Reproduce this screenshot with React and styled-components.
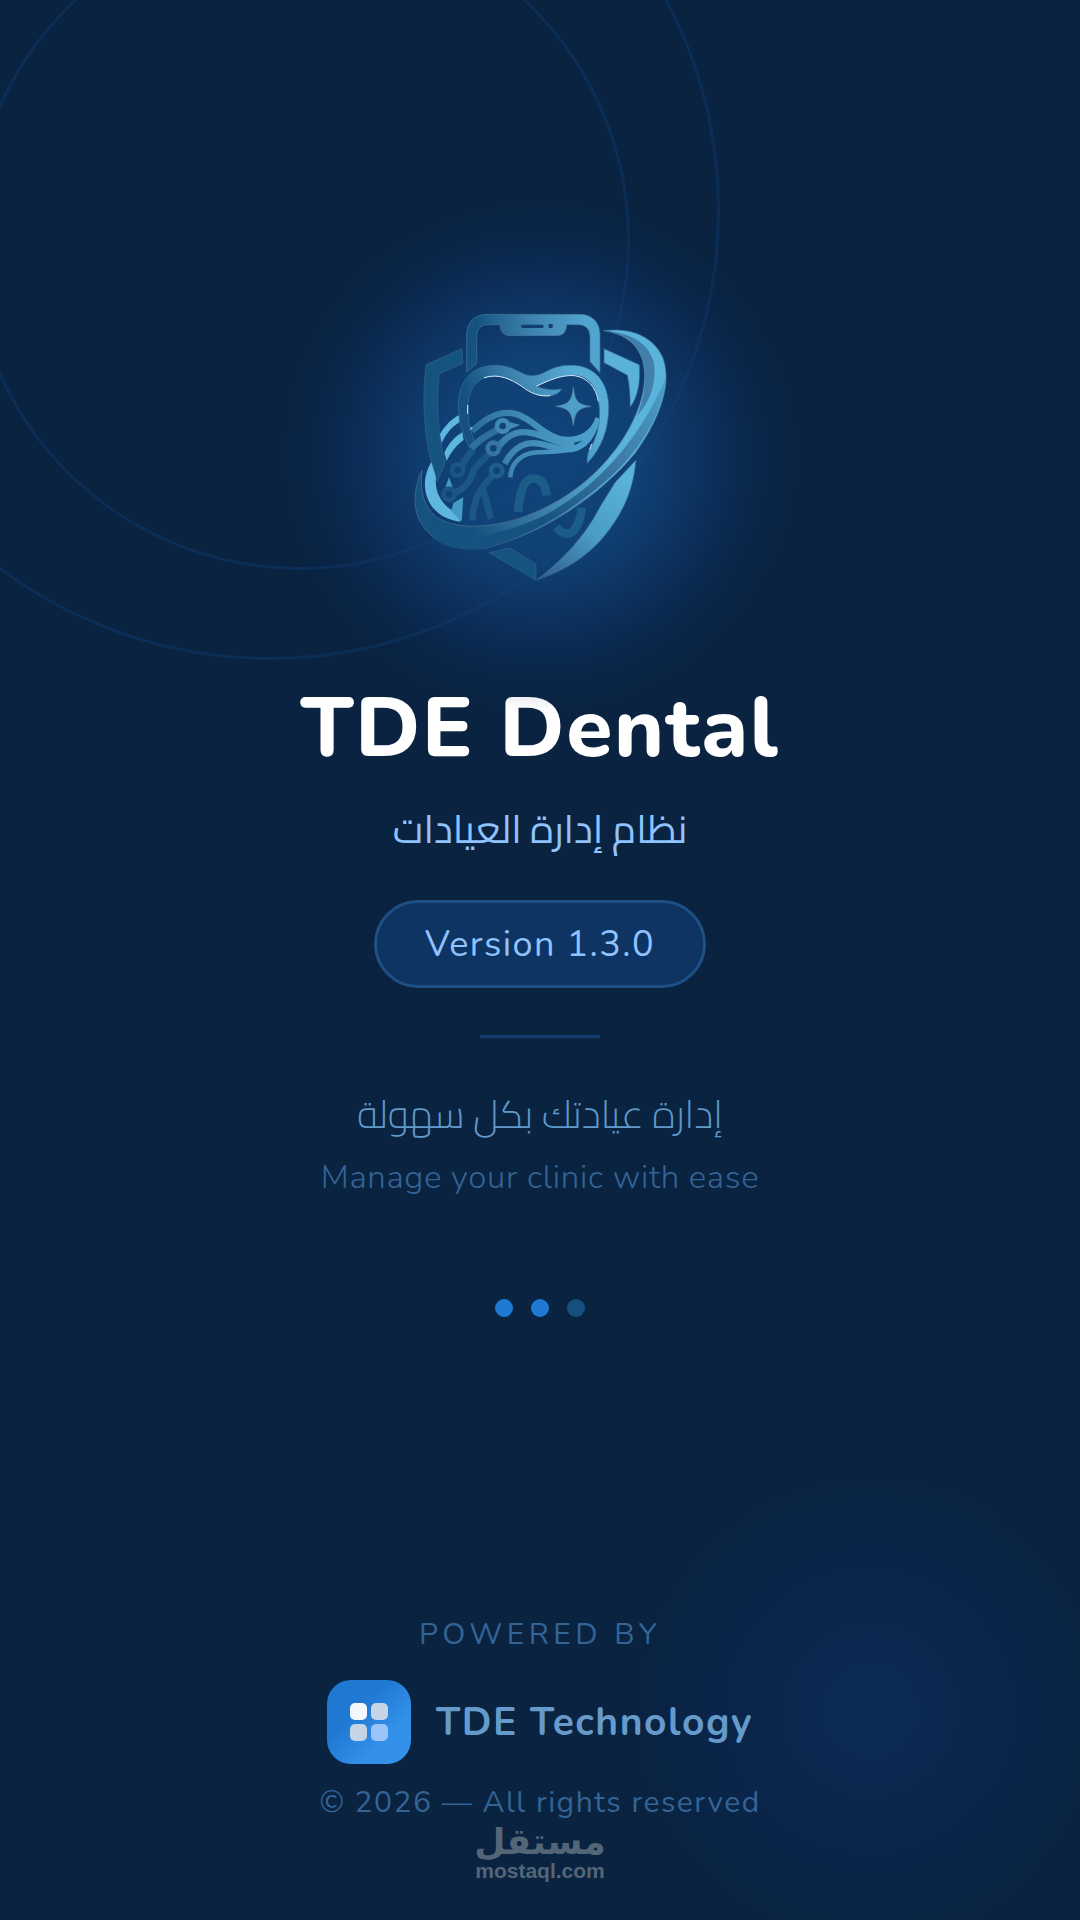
import React from 'react';
import styled, { createGlobalStyle } from 'styled-components';

// Content declarations:
const dots = [
  { id: 0, color: '#1f7ad4' },
  { id: 1, color: '#1f7ad4' },
  { id: 2, color: '#15507f' },
];

const nodes = [
  { id: 0, x: 338, y: 408, color: '#4089b3' },
  { id: 1, x: 310, y: 475, color: '#35759f' },
  { id: 2, x: 320, y: 542, color: '#205d8c' },
  { id: 3, x: 203, y: 540, color: '#1c5584' },
  { id: 4, x: 177, y: 613, color: '#1c5584' },
];

const GlobalStyle = createGlobalStyle`
  * {
    box-sizing: border-box;
  }

  body {
    margin: 0;
    background: #092341;
    font-family: Nunito, 'Open Sans', 'DejaVu Sans', sans-serif;
  }

  h1, p {
    margin: 0;
  }
`;

// Styled Child Components
const Screen = styled.div`
  position: relative;
  display: flex;
  flex-direction: column;
  min-height: 100vh;
  overflow: hidden;
  background: #092341;
  text-align: center;
`;

const Ring = styled.div`
  position: absolute;
  left: ${props => props.$x - props.$radius}px;
  top: ${props => props.$y - props.$radius}px;
  width: ${props => props.$radius * 2}px;
  height: ${props => props.$radius * 2}px;
  border: 3px solid rgba(26, 92, 176, 0.18);
  border-radius: 50%;
`;

const CornerGlow = styled.div`
  position: absolute;
  right: -60px;
  bottom: -60px;
  width: 540px;
  height: 540px;
  background: radial-gradient(
    circle closest-side,
    rgba(18, 64, 130, 0.3),
    rgba(14, 46, 112, 0.24) 42%,
    rgba(14, 46, 112, 0.12) 66%,
    rgba(14, 46, 112, 0) 86%
  );
`;

const Hero = styled.main`
  position: relative;
  flex: 1;
  display: flex;
  flex-direction: column;
  align-items: center;
  justify-content: center;
  padding-bottom: 8px;
`;

const LogoBox = styled.div`
  position: relative;
  width: 300px;
  height: 310px;

  &::before {
    content: '';
    position: absolute;
    inset: -110px;
    background: radial-gradient(
      circle 256px at 50% 52%,
      rgba(17, 70, 128, 0.9) 0%,
      rgba(17, 70, 128, 0.84) 38%,
      rgba(16, 64, 120, 0.62) 58%,
      rgba(15, 56, 114, 0.34) 76%,
      rgba(13, 46, 100, 0.14) 90%,
      rgba(13, 46, 100, 0) 100%
    );
  }

  svg {
    position: relative;
    display: block;
    width: 100%;
    height: 100%;
  }
`;

const Title = styled.h1`
  margin-top: 73px;
  color: #fff;
  font-size: 84px;
  font-weight: 800;
  line-height: 112px;
  letter-spacing: 0.02em;
`;

const Subtitle = styled.p`
  margin-top: 16px;
  color: #90c2fd;
  font-family: Cairo, 'DejaVu Sans', sans-serif;
  font-size: 39px;
  line-height: 56px;
`;

const VersionBadge = styled.div`
  margin-top: 43px;
  padding: 2px 48px 0;
  border: 3px solid #1f5085;
  border-radius: 44px;
  background: #0e3464;
  color: #90c2fd;
  font-size: 36px;
  line-height: 80px;
  letter-spacing: 0.04em;
`;

const Divider = styled.hr`
  width: 120px;
  height: 3px;
  margin: 47px 0 0;
  border: 0;
  background: #143c70;
`;

const Tagline = styled.p`
  margin-top: 48px;
  color: #609acb;
  font-family: Cairo, 'DejaVu Sans', sans-serif;
  font-size: 39px;
  font-weight: 300;
  line-height: 56px;
`;

const TaglineEnglish = styled.p`
  margin-top: 12px;
  color: #346496;
  font-size: 33px;
  font-weight: 300;
  line-height: 48px;
  letter-spacing: 0.02em;
`;

const Dots = styled.div`
  display: flex;
  gap: 18px;
  margin-top: 97px;
`;

const Dot = styled.span`
  width: 18px;
  height: 18px;
  border-radius: 50%;
  background: ${props => props.$color};
`;

const Footer = styled.footer`
  position: relative;
  display: flex;
  flex-direction: column;
  align-items: center;
  padding-bottom: 39px;
`;

const FooterText = styled.p`
  color: #346496;
  font-size: 30px;
  line-height: 40px;
  letter-spacing: ${props => (props.$wide ? '0.15em' : '0.05em')};
`;

const Brand = styled.div`
  display: flex;
  align-items: center;
  gap: 25px;
  margin: 25px 0 19px;
`;

const BrandIcon = styled.div`
  display: grid;
  grid-template-columns: 17px 17px;
  gap: 4px;
  place-content: center;
  width: 84px;
  height: 84px;
  border-radius: 24px;
  background: linear-gradient(135deg, #1f78d1 35%, #3391ea 70%);
`;

const BrandTile = styled.span`
  height: 17px;
  border-radius: 5px;
  background: ${props => props.$color};
`;

const BrandName = styled.span`
  padding-top: 2px;
  color: #659aca;
  font-size: 39px;
  font-weight: 700;
  line-height: 56px;
  letter-spacing: 0.04em;
`;

const Watermark = styled.div`
  display: flex;
  flex-direction: column;
  align-items: center;
  color: #546578;
  font-weight: 700;
`;

const WatermarkArabic = styled.span`
  font-family: 'DejaVu Sans', sans-serif;
  font-size: 36px;
  line-height: 38px;
`;

const WatermarkLatin = styled.span`
  font-family: 'Liberation Sans', sans-serif;
  font-size: 21px;
  line-height: 20px;
`;

function DentalLogo() {
  return (
    <svg viewBox="0 0 900 930" fill="none" aria-label="TDE Dental" role="img">
      <defs>
        <linearGradient id="metal" gradientUnits="userSpaceOnUse" x1="300" y1="470" x2="600" y2="340">
          <stop offset="0" stopColor="#15507f" />
          <stop offset="0.5" stopColor="#4088b3" />
          <stop offset="1" stopColor="#57add6" />
        </linearGradient>
        <linearGradient id="wave" gradientUnits="userSpaceOnUse" x1="240" y1="440" x2="580" y2="440">
          <stop offset="0" stopColor="#296b9a" />
          <stop offset="0.4" stopColor="#3f87b2" />
          <stop offset="1" stopColor="#4b9fca" />
        </linearGradient>
        <linearGradient id="swoosh" gradientUnits="userSpaceOnUse" x1="250" y1="720" x2="720" y2="400">
          <stop offset="0" stopColor="#15527f" />
          <stop offset="0.45" stopColor="#4489b3" />
          <stop offset="0.8" stopColor="#5ab3da" />
        </linearGradient>
        <linearGradient id="facet" gradientUnits="userSpaceOnUse" x1="450" y1="690" x2="810" y2="260">
          <stop offset="0" stopColor="#15527f" />
          <stop offset="0.5" stopColor="#3d7ba6" />
          <stop offset="1" stopColor="#4aa0c8" />
        </linearGradient>
        <linearGradient id="tip" gradientUnits="userSpaceOnUse" x1="450" y1="860" x2="710" y2="560">
          <stop offset="0" stopColor="#315f8d" />
          <stop offset="0.5" stopColor="#4a9cc5" />
          <stop offset="1" stopColor="#5ab3da" />
        </linearGradient>
        <linearGradient id="phone" gradientUnits="userSpaceOnUse" x1="260" y1="0" x2="590" y2="0">
          <stop offset="0" stopColor="#15537f" />
          <stop offset="0.5" stopColor="#3f83af" />
          <stop offset="1" stopColor="#50a5cf" />
        </linearGradient>
      </defs>

      {/* phone */}
      <path
        d="M230 247V135C230 97 254 73 292 73H570C606 73 630 97 630 135V248L600 215V143C600 117 588 104 562 104H530C529 126 519 137 500 137H362C341 137 331 126 330 104H296C271 104 260 117 260 143V220Z"
        fill="url(#phone)"
        stroke="#477399"
        strokeWidth="2"
      />
      <path d="M398 109H456" stroke="#123f70" strokeWidth="10" strokeLinecap="round" />
      <circle cx="482" cy="108" r="7" fill="#123f70" />

      {/* shield */}
      <g stroke="#35658d" strokeWidth="2">
        <path d="M216 176L108 224C94 350 104 470 142 575L165 518C143 428 138 345 148 252L218 220Z" fill="#15547f" />
        <path d="M298 788L360 774L438 822V870Z" fill="#15547f" />
        <path d="M642 176L748 224C752 276 744 322 720 352C721 316 718 284 712 256L642 218Z" fill="#5ab1d9" />
        <path d="M738 510C731 583 713 635 678 690C622 778 551 833 440 870C536 794 591 726 630 650L676 576Z" fill="url(#tip)" />
      </g>

      {/* left arc and whiskers */}
      <g fill="#5fb6de">
        <path d="M124 516C98 560 101 604 117 635C135 670 170 690 210 695L208 660L188 662C153 641 133 604 138 562Z" />
        <path d="M150 432C165 407 184 387 208 375V397C184 412 168 431 155 460Z" />
        <path d="M163 488C176 461 194 440 217 427L221 450C199 466 184 485 170 513Z" />
        <path d="M177 562L188 592H166Z" fill="#459bc6" />
        <path d="M220 622L215 695L183 662L191 638Z" fill="#459bc6" />
      </g>

      {/* waves */}
      <g stroke="url(#wave)" strokeWidth="19">
        <path d="M246 424C292 378 334 360 378 372C431 388 455 434 510 447C569 458 611 431 626 385" />
        <path d="M326 469C353 433 387 421 424 429C464 435 497 463 553 462" />
        <path d="M344 521C370 472 407 454 447 461C488 469 534 490 568 469C592 458 605 434 615 408" />
        <path d="M361 562C363 516 398 489 440 487C472 485 500 487 530 479" strokeWidth="14" />
      </g>

      {/* tooth */}
      <path
        d="M250 490C217 440 203 390 206 333C211 264 252 226 318 226C352 226 376 239 402 252C424 262 448 257 470 244C494 230 520 225 550 226C618 229 656 281 656 352C656 421 634 474 592 520C590 503 594 488 598 479C622 443 631 399 628 352C623 291 595 256 550 256C509 256 475 272 440 288C463 300 491 301 515 297C506 314 485 319 460 318C433 315 414 301 393 286C361 265 335 257 309 258C262 263 236 295 234 345C232 388 241 426 256 457Z"
        fill="url(#metal)"
        stroke="#38719a"
        strokeWidth="2"
      />
      <g stroke="#d8efff" strokeWidth="3" strokeLinecap="round">
        <path d="M283 263C326 249 362 267 397 290C424 311 448 320 480 317" />
        <path d="M440 288C479 270 514 254 554 257C592 263 618 291 625 333" />
        <path d="M233 346V370M241 418L246 412M599 478L605 463" />
      </g>

      {/* star */}
      <path
        d="M550 292C554 332 562 344 602 349C562 355 555 366 550 406C545 366 537 355 498 349C537 344 546 332 550 292Z"
        fill="#4d9fc9"
        stroke="#668caa"
        strokeWidth="2"
      />

      {/* circuit */}
      <path d="M320 421C288 437 262 453 244 476" stroke="#2f6f9c" strokeWidth="20" />
      <g stroke="#1b5685" strokeWidth="20">
        <path d="M250 480C238 490 230 505 216 524" />
        <path d="M298 490L253 536C243 572 220 602 194 607" />
        <path d="M309 557C279 585 250 620 247 691M276 594C290 619 291 656 304 686" />
      </g>
      <path d="M350 394L391 405L350 421Z" fill="#448bb4" />
      {nodes.map(node => (
        <circle
          key={node.id}
          cx={node.x}
          cy={node.y}
          r="17"
          fill="#10427a"
          stroke={node.color}
          strokeWidth="14"
        />
      ))}

      {/* roots */}
      <g stroke="#1c5c88" strokeWidth="26">
        <path d="M384 666C389 607 401 565 431 565C457 566 467 589 470 617" />
        <path d="M499 711C521 740 546 735 559 711C571 690 574 673 575 653" />
      </g>

      {/* swoosh */}
      <path
        d="M640 122C729 112 791 143 818 202C850 285 803 397 735 490C633 614 466 728 292 773C177 792 89 737 76 650C72 612 80 573 96 541C89 602 102 651 139 681C194 719 299 717 402 680C527 635 627 553 694 454C746 374 778 286 757 209C741 158 699 130 640 122Z"
        fill="url(#swoosh)"
        stroke="#4d7394"
        strokeWidth="2"
      />
      <path
        d="M640 122C718 126 775 157 791 216C801 286 778 336 741 378C763 326 772 261 757 209C741 158 699 130 640 122Z"
        fill="#427faa"
      />
      <path
        d="M828 262C822 380 724 516 632 586C531 671 408 742 292 773C225 785 165 774 128 743C226 759 334 731 448 684C575 622 735 487 828 262Z"
        fill="url(#facet)"
      />
    </svg>
  );
}

function App() {
  return (
    <>
      <GlobalStyle />
      <Screen>
        <Ring $x={270} $y={210} $radius={450} />
        <Ring $x={300} $y={240} $radius={330} />
        <CornerGlow />

        <Hero>
          <LogoBox>
            <DentalLogo />
          </LogoBox>
          <Title>TDE Dental</Title>
          <Subtitle lang="ar" dir="rtl">نظام إدارة العيادات</Subtitle>
          <VersionBadge>Version 1.3.0</VersionBadge>
          <Divider />
          <Tagline lang="ar" dir="rtl">إدارة عيادتك بكل سهولة</Tagline>
          <TaglineEnglish>Manage your clinic with ease</TaglineEnglish>
          <Dots>
            {dots.map(dot => (
              <Dot $color={dot.color} key={dot.id} />
            ))}
          </Dots>
        </Hero>

        <Footer>
          <FooterText $wide>POWERED BY</FooterText>
          <Brand>
            <BrandIcon>
              <BrandTile $color="#f4f8fc" />
              <BrandTile $color="#c5d5e6" />
              <BrandTile $color="#c5d5e6" />
              <BrandTile $color="#9bc5fa" />
            </BrandIcon>
            <BrandName>TDE Technology</BrandName>
          </Brand>
          <FooterText>© 2026 — All rights reserved</FooterText>
          <Watermark>
            <WatermarkArabic lang="ar" dir="rtl">مستقل</WatermarkArabic>
            <WatermarkLatin>mostaql.com</WatermarkLatin>
          </Watermark>
        </Footer>
      </Screen>
    </>
  );
}

export default App;
